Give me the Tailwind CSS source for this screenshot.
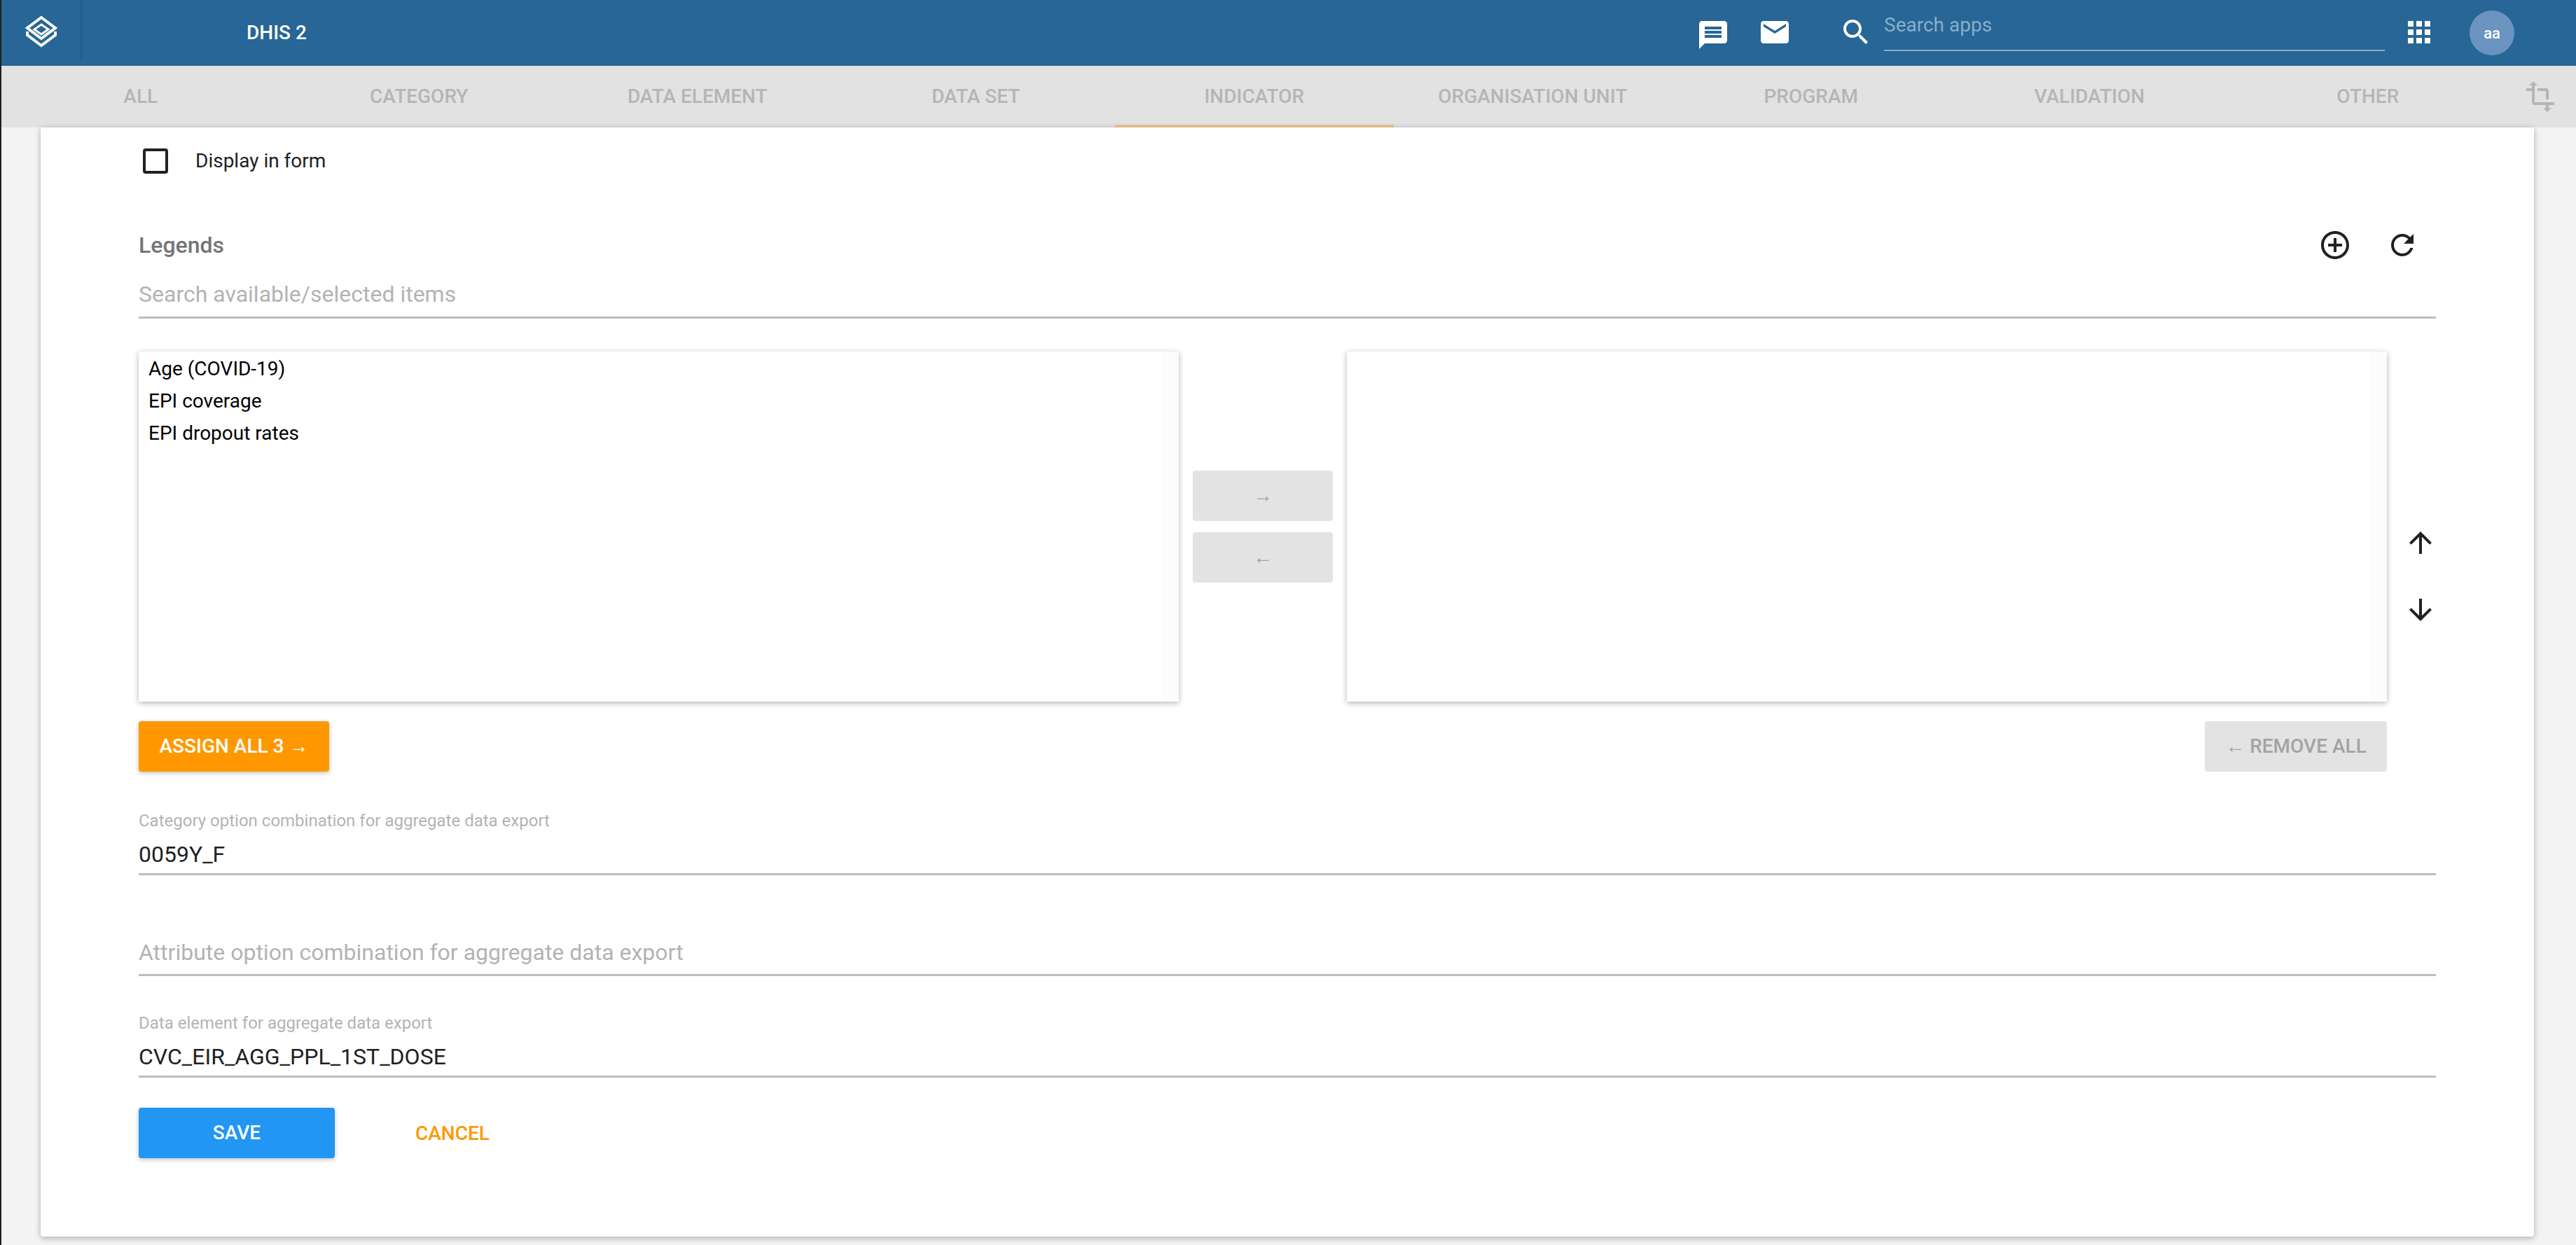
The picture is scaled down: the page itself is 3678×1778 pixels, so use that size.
<!doctype html>
<html><head><meta charset="utf-8"><script src="https://cdn.jsdelivr.net/npm/@tailwindcss/browser@4"></script><title>DHIS 2</title></head>
<body class="h-[1778px] w-[3678px] overflow-hidden bg-[#f3f3f3] font-['Roboto',sans-serif]">
<div class="flex h-full flex-col border-l-2 border-[#1f1f1f]">
<header class="flex h-[94px] shrink-0 items-center bg-[#276696] text-white">
  <div class="flex h-[85px] w-[115px] shrink-0 items-center justify-center self-start border-r-2 border-[#235d89] pt-[4px]">
    <svg class="h-[46px] w-[52px]" viewBox="0 0 52 46" fill="none" stroke="#fff" stroke-width="4"><path d="M26 3 L46 18 L26 33 L6 18 Z"/><path d="M26 13 L36 20 L26 27 L16 20 Z" stroke-width="3"/><path d="M6 23 L6 28 L26 43 L46 28 L46 23"/></svg>
  </div>
  <div class="ml-[235px] w-[2070px] text-[28px] font-medium leading-[36px]">DHIS 2</div>
  <svg class="h-[48px] w-[48px] mt-[6px] fill-white" viewBox="0 0 24 24"><path d="M20 2H4c-1.1 0-1.99.9-1.99 2L2 22l4-4h14c1.1 0 2-.9 2-2V4c0-1.1-.9-2-2-2zm-2 12H6v-2h12v2zm0-3H6V9h12v2zm0-3H6V6h12v2z"/></svg>
  <svg class="ml-[40px] h-[48px] w-[48px] mt-[-2px] fill-white" viewBox="0 0 24 24"><path d="M20 4H4c-1.1 0-1.99.9-1.99 2L2 18c0 1.1.9 2 2 2h16c1.1 0 2-.9 2-2V6c0-1.1-.9-2-2-2zm0 4l-8 5-8-5V6l8 5 8-5v2z"/></svg>
  <svg class="ml-[68px] h-[48px] w-[48px] mt-[-2px] fill-white" viewBox="0 0 24 24"><path d="M15.5 14h-.79l-.28-.27C15.41 12.59 16 11.11 16 9.5 16 5.91 13.09 3 9.5 3S3 5.91 3 9.5 5.91 16 9.5 16c1.61 0 3.09-.59 4.23-1.57l.27.28v.79l5 4.99L20.49 19l-4.99-5zm-6 0C7.01 14 5 11.99 5 9.5S7.01 5 9.5 5 14 7.01 14 9.5 11.99 14 9.5 14z"/></svg>
  <div class="ml-[16px] flex h-[73px] w-[715px] items-center self-start border-b-2 border-[#8aaecb] text-[28px] text-[#8aaecb]">Search apps</div>
  <svg class="ml-[25px] h-[48px] w-[48px] mt-[-2px] fill-white" viewBox="0 0 24 24"><path d="M4 8h4V4H4v4zm6 12h4v-4h-4v4zm-6 0h4v-4H4v4zm0-6h4v-4H4v4zm6 0h4v-4h-4v4zm6-10v4h4V4h-4zm-6 4h4V4h-4v4zm6 6h4v-4h-4v4zm0 6h4v-4h-4v4z"/></svg>
  <div class="ml-[48px] flex h-[64px] w-[64px] items-center justify-center rounded-full bg-[#6b94c0] text-[22px] font-medium">aa</div>
</header>
<nav class="flex h-[88px] shrink-0 items-center bg-[#e2e2e2] text-[28px] font-medium text-[#b7b5b3]">
  <div class="flex h-full w-[397.5px] items-center justify-center">ALL</div>
  <div class="flex h-full w-[397.5px] items-center justify-center">CATEGORY</div>
  <div class="flex h-full w-[397.5px] items-center justify-center">DATA ELEMENT</div>
  <div class="flex h-full w-[397.5px] items-center justify-center">DATA SET</div>
  <div class="flex h-full w-[397.5px] items-center justify-center border-b-4 border-[#f0c690] pt-[4px]">INDICATOR</div>
  <div class="flex h-full w-[397.5px] items-center justify-center">ORGANISATION UNIT</div>
  <div class="flex h-full w-[397.5px] items-center justify-center">PROGRAM</div>
  <div class="flex h-full w-[397.5px] items-center justify-center">VALIDATION</div>
  <div class="flex h-full w-[397.5px] items-center justify-center">OTHER</div>
  <svg class="ml-[23px] h-[48px] w-[48px] fill-[#b7b5b3]" viewBox="0 0 24 24"><path d="M22 18v-2H8V4h2L7 1 4 4h2v2H2v2h4v8c0 1.1.9 2 2 2h8v2h-2l3 3 3-3h-2v-2h4zM10 8h6v6h2V8c0-1.1-.9-2-2-2h-6v2z"/></svg>
</nav>
<main class="ml-[56px] h-[1584px] w-[3560px] shrink-0 rounded-b-[4px] bg-white px-[140px] pt-[30px] shadow-[0_2px_8px_rgba(0,0,0,0.3)]">
  <label class="flex h-[36px] items-center pl-[6px]">
    <span class="h-[36px] w-[36px] rounded-[4px] border-4 border-[#212121]"></span>
    <span class="ml-[39px] text-[28px] text-[#212121]">Display in form</span>
  </label>
  <div class="mt-[78px] flex h-[48px] items-center pr-[24px]">
    <div class="flex-1 text-[32px] font-medium text-[#757575]">Legends</div>
    <svg class="h-[48px] w-[48px] fill-[#212121]" viewBox="0 0 24 24"><path d="M13 7h-2v4H7v2h4v4h2v-4h4v-2h-4V7zm-1-5C6.48 2 2 6.48 2 12s4.48 10 10 10 10-4.48 10-10S17.52 2 12 2zm0 18c-4.41 0-8-3.59-8-8s3.59-8 8-8 8 3.59 8 8-3.59 8-8 8z"/></svg>
    <svg class="ml-[48px] h-[48px] w-[48px] fill-[#212121]" viewBox="0 0 24 24"><path d="M17.65 6.35C16.2 4.9 14.21 4 12 4c-4.42 0-7.99 3.58-7.99 8s3.57 8 7.99 8c3.73 0 6.84-2.55 7.73-6h-2.08c-.82 2.33-3.04 4-5.65 4-3.31 0-6-2.69-6-6s2.69-6 6-6c1.66 0 3.14.69 4.22 1.78L13 11h7V4l-2.35 2.35z"/></svg>
  </div>
  <div class="flex h-[81px] items-end border-b-[3px] border-[#bdbdbd] pb-[12px] text-[32px] leading-[40px] text-[#b3b3b3]">Search available/selected items</div>
  <div class="mt-[47px] flex h-[500px] w-[3282px]">
    <div class="flex w-[1485px] shrink-0 bg-white shadow-[0_2px_8px_rgba(0,0,0,0.3)]">
      <ul class="flex-1 pl-[14px] pt-[2px] text-[28px] leading-[46px] text-black"><li>Age (COVID-19)</li><li>EPI coverage</li><li>EPI dropout rates</li></ul>
      <div class="w-[24px] bg-[#fcfcfc]"></div>
    </div>
    <div class="flex w-[240px] shrink-0 flex-col items-center justify-center gap-[16px]">
      <div class="flex h-[72px] w-[200px] items-center justify-center rounded-[4px] bg-[#e3e3e3] text-[28px] font-medium text-[#a3a3a3]">→</div>
      <div class="flex h-[72px] w-[200px] items-center justify-center rounded-[4px] bg-[#e3e3e3] text-[28px] font-medium text-[#a3a3a3]">←</div>
    </div>
    <div class="flex w-[1485px] shrink-0 justify-end bg-white shadow-[0_2px_8px_rgba(0,0,0,0.3)]"><div class="w-[24px] bg-[#fcfcfc]"></div></div>
    <div class="ml-[24px] flex w-[48px] shrink-0 flex-col gap-[48px] pt-[249px]">
      <svg class="h-[48px] w-[48px] fill-[#212121]" viewBox="0 0 24 24"><path d="M4 12l1.41 1.41L11 7.83V20h2V7.83l5.58 5.59L20 12l-8-8-8 8z"/></svg>
      <svg class="h-[48px] w-[48px] fill-[#212121]" viewBox="0 0 24 24"><path d="M20 12l-1.41-1.41L13 16.17V4h-2v12.17l-5.58-5.59L4 12l8 8 8-8z"/></svg>
    </div>
  </div>
  <div class="mt-[28px] flex justify-between pr-[70px]">
    <div class="flex h-[72px] w-[272px] items-center justify-center rounded-[4px] bg-[#ff9800] text-[28px] font-medium text-white shadow-[0_2px_6px_rgba(0,0,0,0.25)]">ASSIGN ALL 3 →</div>
    <div class="flex h-[72px] w-[260px] items-center justify-center rounded-[4px] bg-[#e3e3e3] text-[28px] font-medium text-[#a3a3a3]">← REMOVE ALL</div>
  </div>
  <div class="mt-[58px] flex h-[90px] flex-col border-b-[3px] border-[#bdbdbd]">
    <div class="text-[24px] leading-[24px] text-[#b3b3b3]">Category option combination for aggregate data export</div>
    <div class="mt-[16px] text-[32px] leading-[40px] text-[#212121]">0059Y_F</div>
  </div>
  <div class="mt-[54px] flex h-[90px] items-end border-b-[3px] border-[#bdbdbd] pb-[11px] text-[32px] leading-[40px] text-[#b3b3b3]">Attribute option combination for aggregate data export</div>
  <div class="mt-[55px] flex h-[90px] flex-col border-b-[3px] border-[#bdbdbd]">
    <div class="text-[24px] leading-[24px] text-[#b3b3b3]">Data element for aggregate data export</div>
    <div class="mt-[16px] text-[32px] leading-[40px] text-[#212121]">CVC_EIR_AGG_PPL_1ST_DOSE</div>
  </div>
  <div class="mt-[43px] flex items-center">
    <div class="flex h-[72px] w-[280px] items-center justify-center rounded-[4px] bg-[#2196f3] text-[28px] font-medium text-white shadow-[0_2px_6px_rgba(0,0,0,0.25)]">SAVE</div>
    <div class="ml-[115px] mt-[2px] text-[28px] font-medium text-[#ff9800]">CANCEL</div>
  </div>
</main>
</div>
</body></html>
